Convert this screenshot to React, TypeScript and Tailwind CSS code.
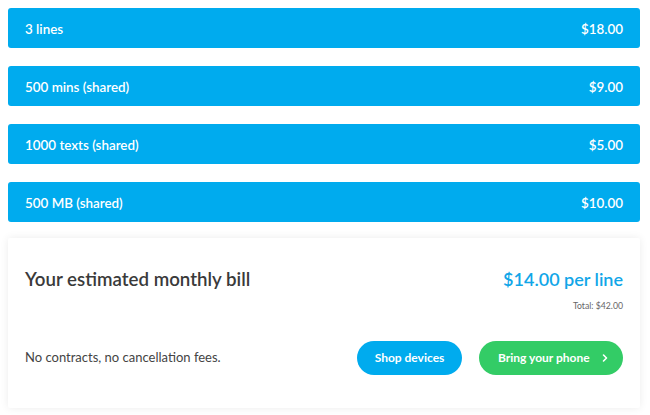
import React from 'react';

const items = [
    { label: '3 lines', price: '$18.00' },
    { label: '500 mins (shared)', price: '$9.00' },
    { label: '1000 texts (shared)', price: '$5.00' },
    { label: '500 MB (shared)', price: '$10.00' },
];

const App: React.FC = () => {
    return (
        <div className="min-h-[415px] w-[650px] bg-white pl-2 pr-[10px] pt-2 font-['Lato',sans-serif]">
            <div className="flex flex-col gap-[18px]">
                {items.map((item) => (
                    <div
                        key={item.label}
                        className="flex h-10 items-center justify-between rounded-[3px] bg-[#00abee] px-[17px] pt-[2px] text-[13.4px] font-semibold text-white"
                    >
                        <span>{item.label}</span>
                        <span>{item.price}</span>
                    </div>
                ))}
            </div>

            <div className="mt-4 h-[170px] rounded-[2px] bg-white px-[17px] pt-[27px] shadow-[0_0_8px_rgba(0,0,0,0.08)]">
                <div className="flex items-center justify-between">
                    <h2 className="text-[18.7px] font-semibold text-[#3a3a3a]">Your estimated monthly bill</h2>
                    <p className="text-[18px] font-semibold text-[#11a6e8]">$14.00 per line</p>
                </div>
                <p className="mt-[7px] text-right text-[8.7px] leading-[12px] text-[#666]">Total: $42.00</p>
                <div className="mt-[29px] flex items-center justify-between">
                    <p className="text-[13px] text-[#444]">No contracts, no cancellation fees.</p>
                    <div className="flex gap-[17px]">
                        <button className="h-[34px] w-[105px] rounded-full bg-[#00abee] text-[12px] font-bold text-white">
                            Shop devices
                        </button>
                        <button className="flex h-[34px] w-[144px] items-center justify-between rounded-full bg-[#33cc66] pl-[19px] pr-[14px] text-[12px] font-bold text-white">
                            <span>Bring your phone</span>
                            <svg width="8" height="10" viewBox="0 0 8 10" fill="none">
                                <path d="M2.5 2l3 3-3 3" stroke="white" strokeWidth="1.6" strokeLinecap="round" strokeLinejoin="round" />
                            </svg>
                        </button>
                    </div>
                </div>
            </div>
        </div>
    );
};

export default App;
